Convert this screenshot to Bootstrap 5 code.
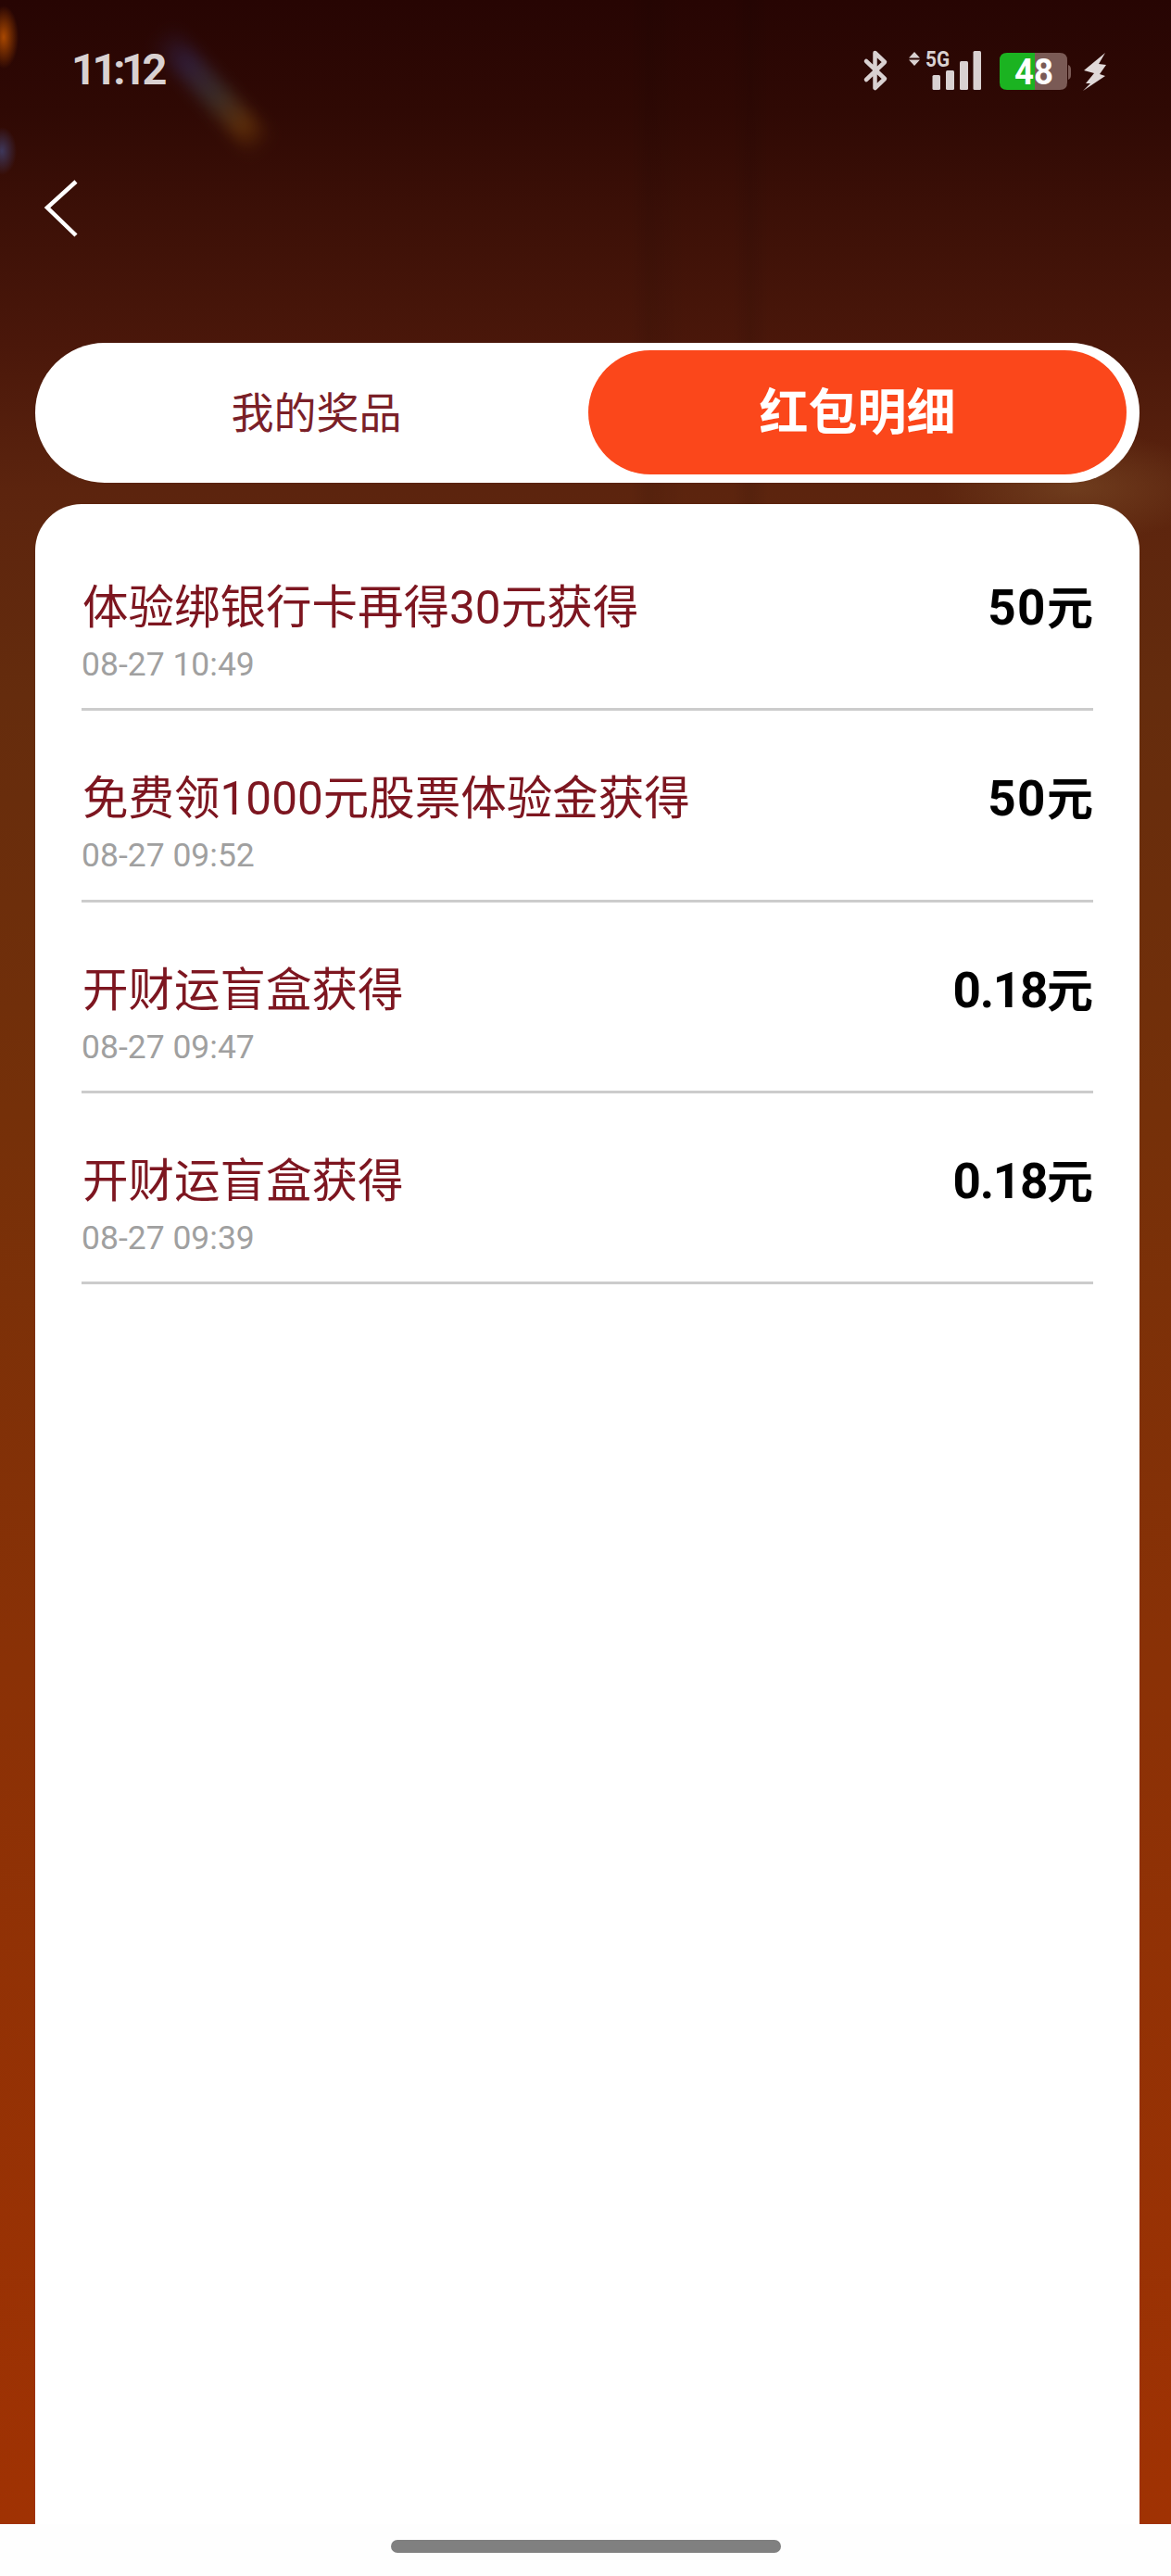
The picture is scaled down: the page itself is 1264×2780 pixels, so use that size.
<!doctype html>
<html lang="zh"><head><meta charset="utf-8">
<link href="https://cdn.jsdelivr.net/npm/bootstrap@5.3.0/dist/css/bootstrap.min.css" rel="stylesheet">
<style>
html,body{margin:0;height:2780px;background:#fefefe;overflow:hidden}
body{font-family:"Roboto","Noto Sans CJK SC",sans-serif}
.stage{height:2724px;padding:0 34px 0 38px;overflow:hidden;background:
 radial-gradient(ellipse 150px 60px at 1160px 525px,rgba(130,85,45,.5),transparent),
 radial-gradient(ellipse 16px 34px at 4px 40px,rgba(175,75,0,.95),transparent),
 radial-gradient(ellipse 16px 26px at 2px 163px,rgba(65,70,120,.75),transparent),
 linear-gradient(90deg,transparent 680px,rgba(0,0,0,.07) 700px,transparent 740px,transparent 790px,rgba(0,0,0,.07) 810px,transparent 830px),
 linear-gradient(180deg,#270503 0,#2f0904 120px,#3c1007 230px,#4a170a 370px,#5c240e 530px,#652c0d 750px,#753009 1200px,#8a3106 1800px,#a03203 2724px)}
.flare{width:30px;height:165px;top:15px;left:213px;transform:rotate(-42deg);filter:blur(8px);pointer-events:none;
 background:linear-gradient(180deg,transparent,rgba(50,40,85,.6) 25%,rgba(65,65,60,.6) 55%,rgba(105,55,10,.75) 82%,transparent)}
.statusrow{height:150px;padding-top:50px;color:#d9d1d1}
.clock{font-size:47px;line-height:50px;font-weight:700;letter-spacing:-4.400px;margin-left:39px}
.statusicons{margin-right:30px}
.statuslabel{font-family:"Roboto",sans-serif;font-weight:700}
.backzone{height:220px;padding:44px 0 0 9px}
.switcher{height:151px;border-radius:75px;padding:8px 14px 9px 8px}
.tabitem{flex:1 1 0;border-radius:68px;color:#7a2028;font-size:46px;line-height:1;padding:2px 0 0 2px}
.tabitem.onstate{background:#fb471b;color:#fff;font-weight:700;font-size:53px;flex:0 0 581px;padding:3px 0 0}
.sheet{margin-top:23px;height:2180px;border-radius:50px 50px 0 0;padding:17px 50px 0 50px}
.entry{height:206.3px;border-bottom:3px solid #cccccc;padding-top:64px}
.ename{color:#7d1620;font-size:49.500px;line-height:62px;padding-left:1px}
.etime{color:#a0a0a0;font-size:35.500px;line-height:44px;margin-top:8px}
.eamount{color:#000;font-size:53px;font-weight:700;line-height:62px}
.spread{letter-spacing:1.500px}
.narrow{letter-spacing:-1.300px}
.unit{font-size:50px;letter-spacing:0}
.homebar{width:421px;height:14px;background:#808080;border-radius:7px;margin:17px auto 0}
</style></head><body>
<div class="stage position-relative">
 <div class="flare position-absolute"></div>
 <div class="statusrow d-flex justify-content-between align-items-start position-relative">
  <span class="clock">11:12</span>
  <svg class="statusicons" width="275" height="52" viewBox="925 50 275 52" aria-hidden="true">
   <path d="M935 66 L955 85 L944.500 95 V57 L955 67 L935 86" fill="none" stroke="#d9d1d1" stroke-width="4.500" stroke-linejoin="round" stroke-linecap="round"/>
   <path d="M987 56 L993 62.500 H981 Z M987 71 L993 64.500 H981 Z" fill="#d9d1d1"/>
   <text class="statuslabel" x="999" y="72" font-size="24" fill="#d9d1d1" textLength="26" lengthAdjust="spacingAndGlyphs">5G</text>
   <rect x="1006.500" y="81" width="8.500" height="16" rx="1.500" fill="#d9d1d1"/>
   <rect x="1021" y="76" width="9" height="21" rx="1.500" fill="#d9d1d1"/>
   <rect x="1036" y="66" width="9" height="31" rx="1.500" fill="#d9d1d1"/>
   <rect x="1050.500" y="55" width="8.500" height="42" rx="1.500" fill="#d9d1d1"/>
   <path d="M1117 57 H1144 Q1152 57 1152 65 V89 Q1152 97 1144 97 H1117 Z" fill="#7a5a55"/>
   <path d="M1117 57 H1087 Q1079 57 1079 65 V89 Q1079 97 1087 97 H1117 Z" fill="#1bb321"/>
   <path d="M1153 70 Q1156 71 1156 75 V81 Q1156 85 1153 86 Z" fill="#7a5a55"/>
   <text class="statuslabel" x="1095" y="91" font-size="38" fill="#fff" textLength="42" lengthAdjust="spacingAndGlyphs">48</text>
   <path d="M1193 57 L1170 76 L1181 79 L1172 90 L1177 90 L1169 98 L1193 82 L1187 80 L1194 70 L1186 69 Z" fill="#e0d9d9"/>
  </svg>
 </div>
 <div class="backzone position-relative">
  <svg width="38" height="62" viewBox="0 0 38 62" aria-hidden="true"><path d="M35 2 L4 30 L35 60" fill="none" stroke="#fff" stroke-width="4.500"/></svg>
 </div>
 <div class="switcher bg-white d-flex position-relative">
  <div class="tabitem d-flex align-items-center justify-content-center">我的奖品</div>
  <div class="tabitem onstate d-flex align-items-center justify-content-center">红包明细</div>
 </div>
 <div class="sheet bg-white position-relative">
  <div class="entry d-flex justify-content-between"><div><div class="ename">体验绑银行卡再得30元获得</div><div class="etime">08-27 10:49</div></div><div class="eamount spread">50<span class="unit">元</span></div></div>
  <div class="entry d-flex justify-content-between"><div><div class="ename">免费领1000元股票体验金获得</div><div class="etime">08-27 09:52</div></div><div class="eamount spread">50<span class="unit">元</span></div></div>
  <div class="entry d-flex justify-content-between"><div><div class="ename">开财运盲盒获得</div><div class="etime">08-27 09:47</div></div><div class="eamount narrow">0.18<span class="unit">元</span></div></div>
  <div class="entry d-flex justify-content-between"><div><div class="ename">开财运盲盒获得</div><div class="etime">08-27 09:39</div></div><div class="eamount narrow">0.18<span class="unit">元</span></div></div>
 </div>
</div>
<div class="homebar"></div>
<script src="https://cdn.jsdelivr.net/npm/bootstrap@5.3.0/dist/js/bootstrap.bundle.min.js"></script>
</body></html>
